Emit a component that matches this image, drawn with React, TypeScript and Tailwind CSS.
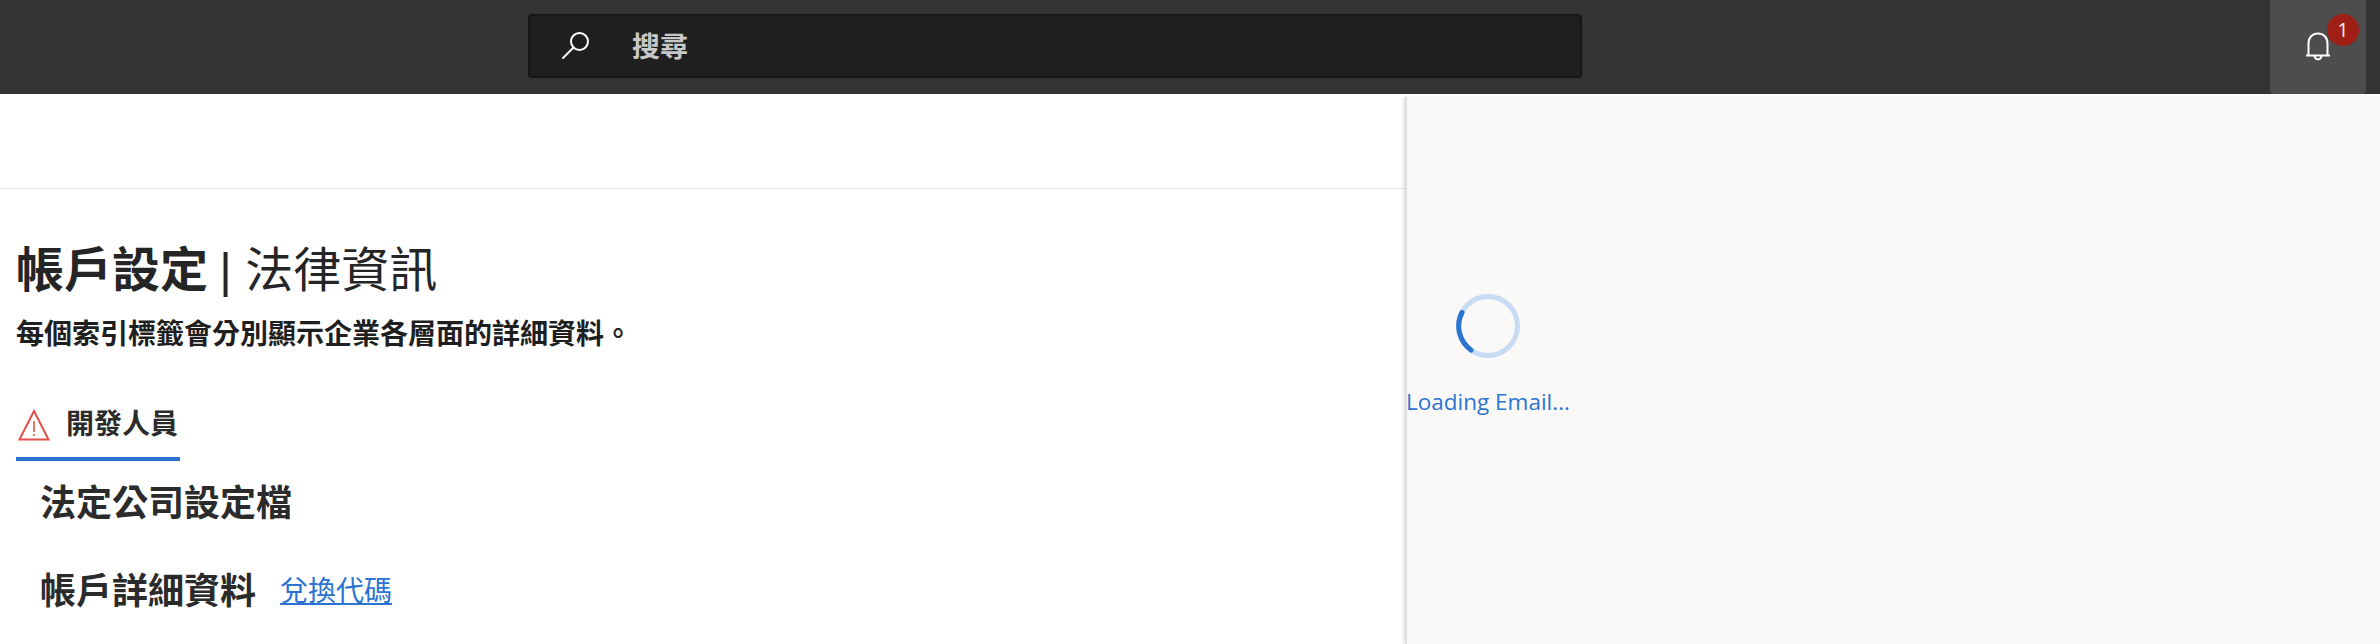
const cjk = "font-['Liberation_Sans','Noto_Sans_CJK_TC',sans-serif]";

function SearchIcon() {
  return (
    <svg width="32" height="32" viewBox="0 0 32 32" fill="none" stroke="#ffffff" strokeWidth="2" className="shrink-0">
      <circle cx="19.5" cy="11.5" r="8.5" />
      <path d="M13.5 17.5 L3 28" strokeLinecap="round" />
    </svg>
  );
}

function BellIcon() {
  return (
    <svg width="26" height="30" viewBox="0 0 26 30" fill="none" stroke="#ffffff" strokeWidth="2">
      <path d="M3.5 23.5 V11.5 C3.5 5.5 7.5 1.5 13 1.5 C18.5 1.5 22.5 5.5 22.5 11.5 V23.5" />
      <path d="M1 23.5 H25" />
      <path d="M9.5 24 C10 28.5 16 28.5 16.5 24" />
    </svg>
  );
}

function WarningIcon() {
  return (
    <svg width="32" height="32" viewBox="0 0 32 32" fill="none" stroke="#e04f4a" strokeWidth="2">
      <path d="M16 2 L30.5 30.5 H1.5 Z" strokeLinejoin="miter" />
      <path d="M16 12 V23" strokeWidth="1.6" />
      <path d="M16 25 V27" strokeWidth="1.6" />
    </svg>
  );
}

function Spinner() {
  return (
    <svg width="64" height="64" viewBox="0 0 64 64" fill="none" strokeWidth="5">
      <circle cx="32" cy="32" r="29.5" stroke="#c7dcf2" />
      <path d="M6 18.5 A29.5 29.5 0 0 0 15 56" stroke="#2b74cf" strokeLinecap="round" />
    </svg>
  );
}

export default function App() {
  return (
    <div className={`h-[644px] w-[2380px] overflow-hidden bg-white flex flex-col ${cjk}`}>
      <header className="h-[94px] shrink-0 bg-[#333333] flex items-start">
        <div className="ml-[528px] mt-[14px] w-[1054px] h-[64px] rounded-[4px] bg-[#1f1f1f] border-2 border-[#161616] flex items-center pl-[30px]">
          <SearchIcon />
          <span className="ml-[40px] mt-[3px] text-[28px] font-semibold text-[#c8c8c8]">搜尋</span>
        </div>
        <div className="ml-auto mr-[14px] relative w-[96px] h-[94px] rounded-b-[4px] bg-[#4d4d4d] flex items-center justify-center">
          <BellIcon />
          <span className="absolute left-[57px] top-[14px] w-[32px] h-[32px] rounded-full bg-[#a01f14] text-[#eeeeee] text-[20px] font-['Open_Sans',sans-serif] flex items-center justify-center">1</span>
        </div>
      </header>
      <div className="flex flex-1 min-h-0">
        <main className="w-[1405px] shrink-0">
          <div className="h-[95px] border-b border-[#e3e3e3]" />
          <div className="pl-[16px] pt-[47px]">
            <h1 className="text-[48px] leading-[70px] text-[#252525]"><span className="font-bold">帳戶設定</span> <span className="-ml-[2px]">|</span> 法律資訊</h1>
            <p className="mt-[9px] text-[28px] leading-[40px] font-semibold text-[#1f1f1f]">每個索引標籤會分別顯示企業各層面的詳細資料。</p>
          </div>
          <div className="ml-[16px] mt-[38px] w-[164px] h-[68px] border-b-4 border-[#2b74cf] flex items-center pl-[2px]">
            <WarningIcon />
            <span className="ml-[16px] text-[28px] font-semibold text-[#2b2b2b]">開發人員</span>
          </div>
          <div className="pl-[40px]">
            <h2 className="mt-[17px] text-[36px] leading-[52px] font-bold text-[#2b2b2b]">法定公司設定檔</h2>
            <div className="mt-[36px] flex items-center">
              <h2 className="text-[36px] leading-[52px] font-bold text-[#2b2b2b]">帳戶詳細資料</h2>
              <a className="ml-[24px] text-[28px] text-[#2b74cf] underline">兌換代碼</a>
            </div>
          </div>
        </main>
        <aside className="flex-1 bg-[#faf9f8] border-l-[2px] border-[#dddddd] mt-[3px] shadow-[-2px_0_3px_rgba(0,0,0,0.10)]">
          <div className="w-[162px] mt-[197px] flex flex-col items-center">
            <Spinner />
            <span className="mt-[29px] text-[22.5px] leading-[30px] text-[#2b74cf] font-['Open_Sans',sans-serif] whitespace-nowrap">Loading Email...</span>
          </div>
        </aside>
      </div>
    </div>
  );
}
